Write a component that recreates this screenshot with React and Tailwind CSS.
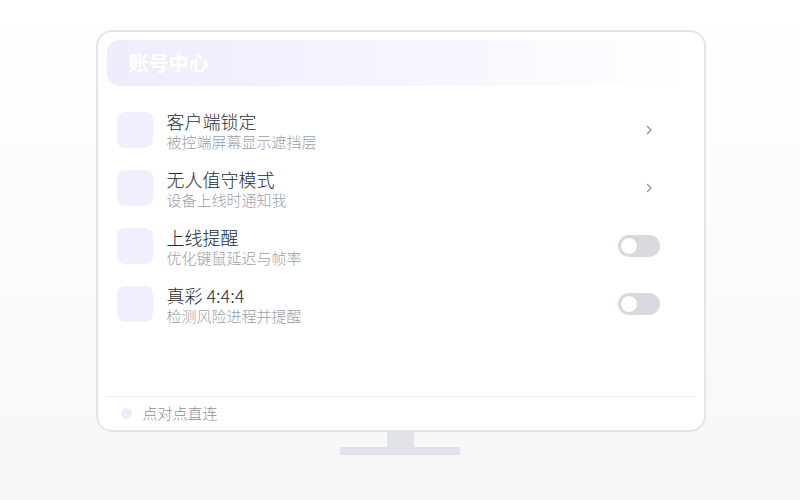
import React from 'react';

const rows = [
  { title: '客户端锁定', desc: '被控端屏幕显示遮挡层', type: 'link' },
  { title: '无人值守模式', desc: '设备上线时通知我', type: 'link' },
  { title: '上线提醒', desc: '优化键鼠延迟与帧率', type: 'toggle' },
  { title: '真彩 4:4:4', desc: '检测风险进程并提醒', type: 'toggle' },
];

const Toggle = () => (
  <div className="w-[42px] h-[22px] rounded-full bg-[#d8dadf] flex items-center px-[2px]">
    <div className="w-[18px] h-[18px] rounded-full bg-white border border-[#d1d5db]" />
  </div>
);

const Chevron = () => (
  <svg className="w-[8px] h-[12px] mr-[7px] text-[#8b919c]" viewBox="0 0 8 12" fill="none" stroke="currentColor" strokeWidth="1.3" strokeLinecap="round" strokeLinejoin="round">
    <path d="M2.5 2.5L6 6l-3.5 3.5" />
  </svg>
);

const App = () => {
  return (
    <div
      className="w-[800px] h-[500px] bg-gradient-to-b from-white to-[#f7f7f8] flex flex-col items-center pt-[30px]"
      style={{ fontFamily: '"Noto Sans CJK SC", "Noto Sans", sans-serif' }}
    >
      {/* monitor */}
      <div className="w-[610px] h-[402px] ml-[1px] bg-white border-2 border-[#e3e5ea] rounded-[16px] px-[9px] pt-[8px] flex flex-col">
        <div className="h-[46px] rounded-[12px] bg-gradient-to-r from-[#efecfd] via-[#f6f4fe] to-white flex items-center pl-[22px]">
          <span className="text-white text-[20px] font-semibold leading-none">账号中心</span>
        </div>

        <div className="flex flex-col gap-[14px] pt-[22px] pl-[10px] pr-[35px]">
          {rows.map((row) => (
            <div key={row.title} className="flex items-center">
              <div className="w-[36px] h-[36px] rounded-[8px] bg-[#f1effd] shrink-0" />
              <div className="ml-[14px] flex-1 flex flex-col pt-[2px]">
                <span className="text-[18px] leading-[22px] font-light text-[#262b33]">{row.title}</span>
                <span className="text-[15px] leading-[20px] font-light text-[#9aa0aa]">{row.desc}</span>
              </div>
              {row.type === 'link' ? <Chevron /> : <Toggle />}
            </div>
          ))}
        </div>

        <div className="mt-auto border-t border-[#eceef2] h-[34px] flex items-center pl-[14px]">
          <div className="w-[11px] h-[11px] rounded-full bg-[#efebfd]" />
          <span className="ml-[11px] text-[15px] font-light text-[#8e939c]">点对点直连</span>
        </div>
      </div>

      {/* stand */}
      <div className="w-[27px] h-[15px] bg-[#e0e3e7]" />
      <div className="w-[120px] h-[8px] bg-[#e0e3e7]" />
    </div>
  );
};

export default App;
